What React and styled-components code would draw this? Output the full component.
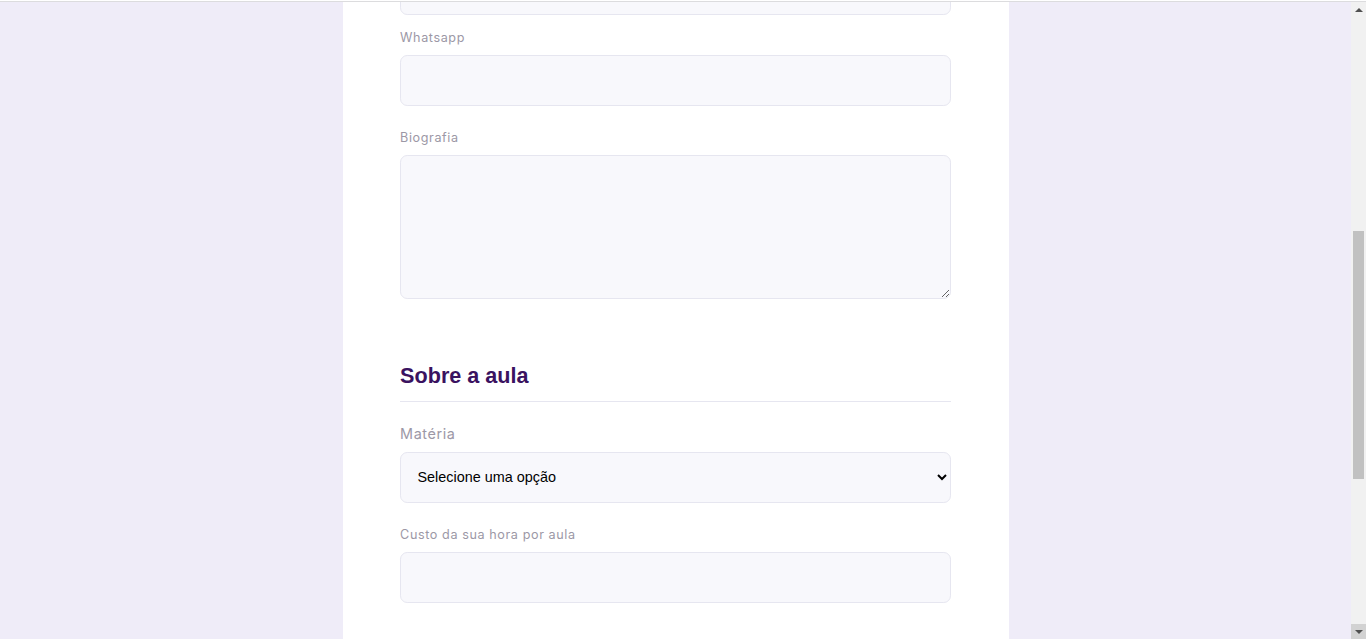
import React from "react";
import styled, { createGlobalStyle } from "styled-components";

const GlobalStyle = createGlobalStyle`
  * {
    box-sizing: border-box;
  }
  html,
  body {
    margin: 0;
    height: 100%;
    overflow: hidden;
    background: #efecf8;
  }
  #root {
    height: 100%;
  }
`;

const Window = styled.div`
  height: 100vh;
  display: flex;
  flex-direction: column;
`;

const TopEdge = styled.div`
  height: 2px;
  flex: none;
  background: #ffffff;
  border-bottom: 1px solid #dcdcde;
`;

const Body = styled.div`
  flex: 1;
  min-height: 0;
  display: flex;
`;

const Viewport = styled.div`
  flex: 1;
  min-width: 0;
  overflow: hidden;
`;

const Card = styled.main`
  width: 666px;
  margin: -44.2px auto 0;
  padding: 0 57.6px 64px;
  background: #ffffff;
`;

const Fieldset = styled.section`
  & + & {
    margin-top: 64px;
  }
`;

const Legend = styled.h2`
  margin: 0 0 21.6px;
  padding-bottom: 12.4px;
  border-bottom: 1px solid #e6e6f0;
  font: 700 21.6px/25px "Liberation Sans", Arial, sans-serif;
  color: #3a1260;
`;

const Field = styled.div`
  margin-top: ${(p) => (p.$spaced ? "22.6px" : "12.6px")};

  &:first-child {
    margin-top: 0;
  }
`;

const Label = styled.label`
  display: block;
  font-family: "Inter", "Noto Sans", sans-serif;
  font-weight: 400;
  font-size: ${(p) => (p.$large ? "14.4px" : "12.6px")};
  line-height: ${(p) => (p.$large ? "21.6px" : "20px")};
  letter-spacing: 0.6px;
  color: #9c98a6;
`;

const controlBase = `
  display: block;
  width: 100%;
  margin-top: 7.2px;
  border: 1px solid #e6e6f0;
  border-radius: 7.2px;
  background: #f8f8fc;
  outline: 0;
  font: 14.4px "Liberation Sans", Arial, sans-serif;
  color: #000000;
`;

const Input = styled.input`
  ${controlBase}
  height: 50.4px;
  padding: 0 14.4px;
`;

const Textarea = styled.textarea`
  ${controlBase}
  height: 144px;
  padding: 10.8px 14.4px;
  resize: vertical;
`;

const Select = styled.select`
  ${controlBase}
  height: 50.4px;
  padding: 0 2px 0 12.4px;
`;

const Scrollbar = styled.div`
  width: 15px;
  flex: none;
  display: flex;
  flex-direction: column;
  background: #f1f1f1;
`;

const ScrollButton = styled.div`
  height: 15px;
  flex: none;
  display: flex;
  align-items: center;
  justify-content: center;
  background: ${(p) => (p.$active ? "#d2d2d2" : "transparent")};

  &::before {
    content: "";
    width: 0;
    height: 0;
    border-left: 4px solid transparent;
    border-right: 4px solid transparent;
    ${(p) =>
      p.$down
        ? "border-top: 4px solid #505050;"
        : "border-bottom: 4px solid #505050;"}
  }
`;

const Track = styled.div`
  flex: 1;
  padding: 0 2px;
`;

const Thumb = styled.div`
  margin-top: 214px;
  height: 248px;
  background: #c1c1c1;
`;

export default function App() {
  return (
    <>
      <GlobalStyle />
      <Window>
        <TopEdge />
        <Body>
          <Viewport>
            <Card>
              <Fieldset>
                <Field>
                  <Input type="text" name="avatar" />
                </Field>
                <Field>
                  <Label htmlFor="whatsapp">Whatsapp</Label>
                  <Input type="text" id="whatsapp" />
                </Field>
                <Field $spaced>
                  <Label htmlFor="bio">Biografia</Label>
                  <Textarea id="bio" />
                </Field>
              </Fieldset>

              <Fieldset>
                <Legend>Sobre a aula</Legend>
                <Field>
                  <Label $large htmlFor="subject">
                    Matéria
                  </Label>
                  <Select id="subject" defaultValue="">
                    <option value="" disabled hidden>
                      Selecione uma opção
                    </option>
                    <option value="Artes">Artes</option>
                    <option value="Biologia">Biologia</option>
                    <option value="Matemática">Matemática</option>
                  </Select>
                </Field>
                <Field $spaced>
                  <Label htmlFor="cost">Custo da sua hora por aula</Label>
                  <Input type="text" id="cost" />
                </Field>
              </Fieldset>
            </Card>
          </Viewport>
          <Scrollbar>
            <ScrollButton />
            <Track>
              <Thumb />
            </Track>
            <ScrollButton $down $active />
          </Scrollbar>
        </Body>
      </Window>
    </>
  );
}
